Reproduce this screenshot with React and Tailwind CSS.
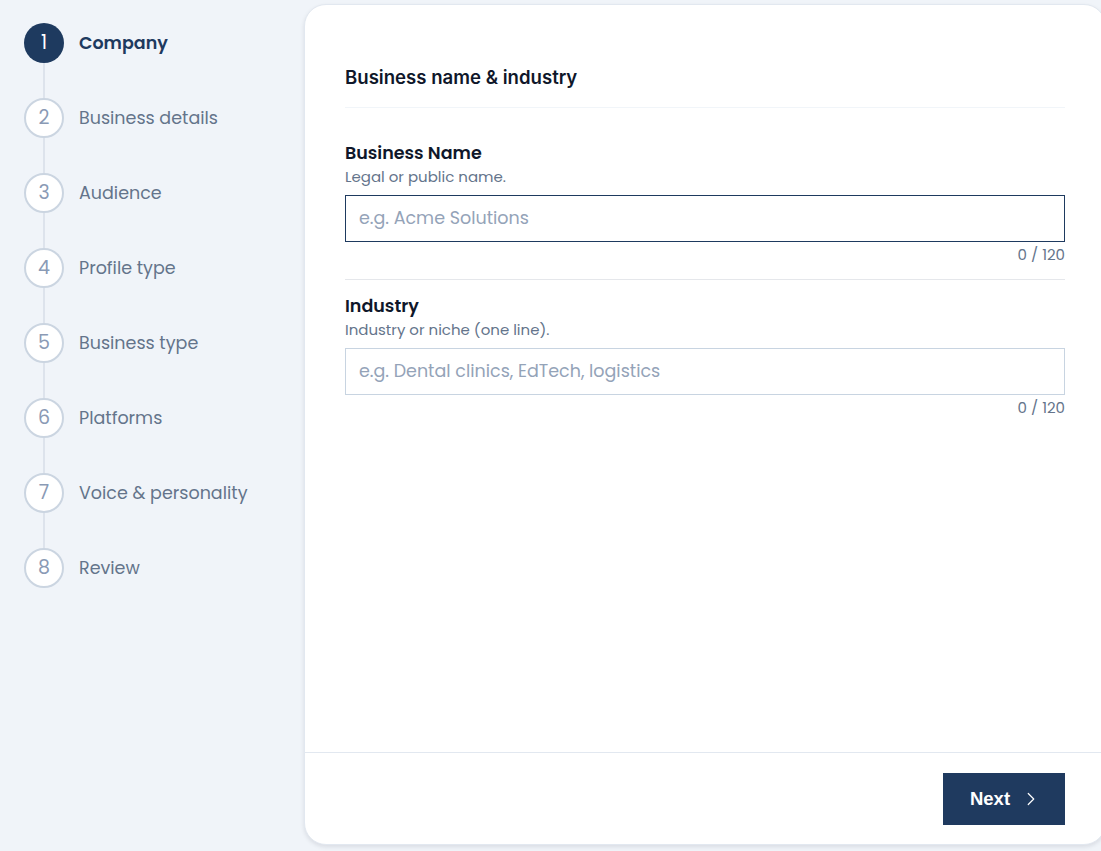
import { ChevronRight } from "lucide-react";

const steps = [
  "Company",
  "Business details",
  "Audience",
  "Profile type",
  "Business type",
  "Platforms",
  "Voice & personality",
  "Review",
];

const Field = ({ label, hint, placeholder, focused }) => {
  return (
    <div>
      <div className="text-[17.5px] font-semibold leading-6 text-[#0f172a]">{label}</div>
      <div className="mt-0.5 text-[15px] leading-5 text-[#64748b]">{hint}</div>
      <div
        className={
          focused
            ? "mt-2 h-[47px] border border-[#1e3a5f] flex items-center px-[13px]"
            : "mt-2 h-[47px] border border-[#c8d4e1] flex items-center px-[13px]"
        }
      >
        <span className="text-[17.5px] text-[#94a3b8]">{placeholder}</span>
      </div>
      <div className="mt-[3px] text-right text-[15px] leading-5 text-[#64748b]">0 / 120</div>
    </div>
  );
};

export default function App() {
  return (
    <div
      className="h-[851px] w-full overflow-hidden flex bg-[#f0f4f9]"
      style={{ fontFamily: "Poppins, 'Open Sans', sans-serif" }}
    >
      {/* steps sidebar */}
      <div className="w-[304px] shrink-0 pl-6 pt-[23px]">
        {steps.map((s, i) => (
          <div key={s} className="flex flex-col">
            <div className="flex items-center gap-[15px]">
              <div
                className={
                  i === 0
                    ? "w-10 h-10 rounded-full bg-[#1e3a5f] text-white flex items-center justify-center text-[19px]"
                    : "w-10 h-10 rounded-full bg-white border-2 border-[#cbd5e1] text-[#8a9ab5] flex items-center justify-center text-[19px]"
                }
              >
                {i + 1}
              </div>
              <span
                className={
                  i === 0
                    ? "text-[17.5px] font-semibold text-[#1e3a5f]"
                    : "text-[17.5px] text-[#64748b]"
                }
              >
                {s}
              </span>
            </div>
            {i < steps.length - 1 && (
              <div className="ml-[19px] w-[2px] h-[35px] bg-[#dde3ec]" />
            )}
          </div>
        ))}
      </div>

      {/* form card */}
      <div className="mt-1 mb-[6px] w-[802px] shrink-0 bg-white rounded-[22px] border border-[#e2e8f0] shadow-[0_2px_4px_rgba(15,23,42,0.1)] flex flex-col">
        <div className="flex-1 px-10 pt-[60px]">
          <h2
            className="text-[18.6px] font-semibold leading-6 text-[#0f172a] pb-[18px] border-b border-[#f1f5f9]"
            style={{ fontFamily: "Inter, sans-serif" }}
          >
            Business name &amp; industry
          </h2>
          <div className="pt-[33px] pb-[14px] border-b border-[#e5e7eb]">
            <Field
              label="Business Name"
              hint="Legal or public name."
              placeholder="e.g. Acme Solutions"
              focused
            />
          </div>
          <div className="pt-[14px]">
            <Field
              label="Industry"
              hint="Industry or niche (one line)."
              placeholder="e.g. Dental clinics, EdTech, logistics"
            />
          </div>
        </div>
        <div className="h-[92px] border-t border-[#e2e8f0] px-10 flex items-center justify-end">
          <button
            className="w-[122px] h-[52px] bg-[#1f3a5f] text-white flex items-center justify-center gap-[10px] pl-1 text-[18.5px] font-bold"
            style={{ fontFamily: "'Liberation Sans', Arial, sans-serif" }}
          >
            Next
            <ChevronRight size={22} strokeWidth={1.3} />
          </button>
        </div>
      </div>
    </div>
  );
}
